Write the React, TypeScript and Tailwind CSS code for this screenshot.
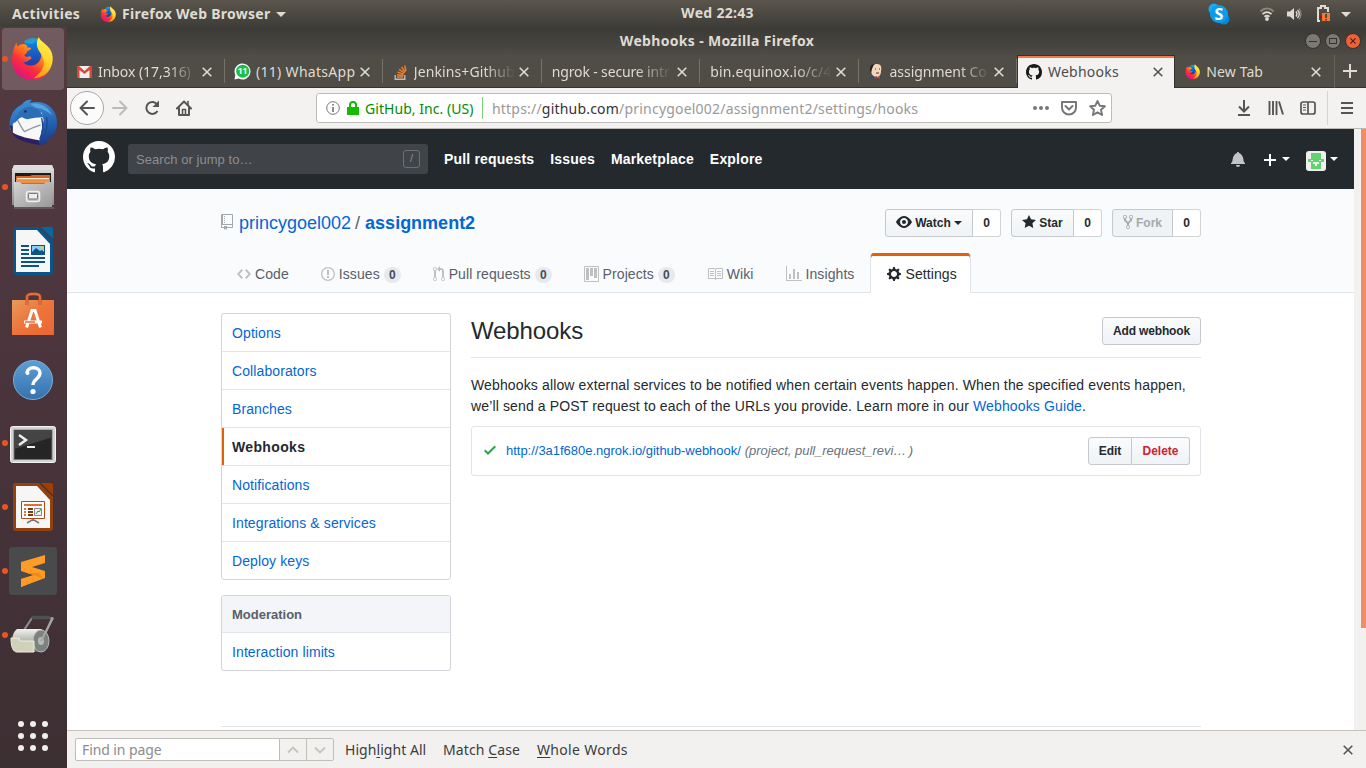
import React from "react";

const OCT = {
  github: "M8 0C3.58 0 0 3.58 0 8c0 3.54 2.29 6.53 5.47 7.59.4.07.55-.17.55-.38 0-.19-.01-.82-.01-1.49-2.01.37-2.53-.49-2.69-.94-.09-.23-.48-.94-.82-1.13-.28-.15-.68-.52-.01-.53.63-.01 1.08.58 1.23.82.72 1.21 1.87.87 2.33.66.07-.52.28-.87.51-1.07-1.78-.2-3.64-.89-3.64-3.95 0-.87.31-1.59.82-2.15-.08-.2-.36-1.02.08-2.12 0 0 .67-.21 2.2.82.64-.18 1.32-.27 2-.27.68 0 1.36.09 2 .27 1.53-1.04 2.2-.82 2.2-.82.44 1.1.16 1.92.08 2.12.51.56.82 1.27.82 2.15 0 3.07-1.87 3.75-3.65 3.95.29.25.54.73.54 1.48 0 1.07-.01 1.93-.01 2.2 0 .21.15.46.55.38A8.013 8.013 0 0 0 16 8c0-4.42-3.58-8-8-8z",
  repo: "M4 9H3V8h1v1zm0-3H3v1h1V6zm0-2H3v1h1V4zm0-2H3v1h1V2zm8-1v12c0 .55-.45 1-1 1H6v2l-1.5-1.5L3 16v-2H1c-.55 0-1-.45-1-1V1c0-.55.45-1 1-1h10c.55 0 1 .45 1 1zm-1 10H1v2h2v-1h3v1h5v-2zm0-10H2v9h9V1z",
  code: "M9.5 3L8 4.5 11.5 8 8 11.5 9.5 13 14 8 9.5 3zm-5 0L0 8l4.5 5L6 11.5 2.5 8 6 4.5 4.5 3z",
  issue: "M7 2.3c3.14 0 5.7 2.56 5.7 5.7s-2.56 5.7-5.7 5.7A5.71 5.71 0 0 1 1.3 8c0-3.14 2.56-5.7 5.7-5.7zM7 1C3.14 1 0 4.14 0 8s3.14 7 7 7 7-3.14 7-7-3.14-7-7-7zm1 3H6v5h2V4zm0 6H6v2h2v-2z",
  pull: "M11 11.28V5c-.03-.78-.34-1.47-.94-2.06C9.46 2.35 8.78 2.03 8 2H7V0L4 3l3 3V4h1c.27.02.48.11.69.31.21.2.3.42.31.69v6.28A1.993 1.993 0 0 0 10 15a1.993 1.993 0 0 0 1-3.72zm-1 2.92c-.66 0-1.2-.55-1.2-1.2 0-.65.55-1.2 1.2-1.2.65 0 1.2.55 1.2 1.2 0 .65-.55 1.2-1.2 1.2zM4 3c0-1.11-.89-2-2-2a1.993 1.993 0 0 0-1 3.72v6.56A1.993 1.993 0 0 0 2 15a1.993 1.993 0 0 0 1-3.72V4.72c.59-.34 1-.98 1-1.72zm-.8 10c0 .66-.55 1.2-1.2 1.2-.65 0-1.2-.55-1.2-1.2 0-.65.55-1.2 1.2-1.2.65 0 1.2.55 1.2 1.2zM2 4.2C1.34 4.2.8 3.65.8 3c0-.65.55-1.2 1.2-1.2.65 0 1.2.55 1.2 1.2 0 .65-.55 1.2-1.2 1.2z",
  project: "M10 12h3V2h-3v10zm-4-2h3V2H6v8zm-4 4h3V2H2v12zm-1 1h13V1H1v14zM14 0H1a1 1 0 0 0-1 1v14a1 1 0 0 0 1 1h13a1 1 0 0 0 1-1V1a1 1 0 0 0-1-1z",
  book: "M3 5h4v1H3V5zm0 3h4V7H3v1zm0 2h4V9H3v1zm11-5h-4v1h4V5zm0 2h-4v1h4V7zm0 2h-4v1h4V9zm2-6v9c0 .55-.45 1-1 1H9.5l-1 1-1-1H2c-.55 0-1-.45-1-1V3c0-.55.45-1 1-1h5.5l1 1 1-1H15c.55 0 1 .45 1 1zm-8 .5L7.5 3H2v9h6V3.5zm7-.5H9.5l-.5.5V12h6V3z",
  graph: "M16 14v1H0V0h1v14h15zM5 13H3V8h2v5zm4 0H7V3h2v10zm4 0h-2V6h2v7z",
  gear: "M14 8.77v-1.6l-1.94-.64-.45-1.09.88-1.84-1.13-1.13-1.81.91-1.09-.45-.69-1.92h-1.6l-.63 1.94-1.11.45-1.84-.88-1.13 1.13.91 1.81-.45 1.09L0 7.23v1.59l1.94.64.45 1.09-.88 1.84 1.13 1.13 1.81-.91 1.09.45.69 1.92h1.59l.63-1.94 1.11-.45 1.84.88 1.13-1.13-.92-1.81.47-1.09L14 8.75v.02zM7 11c-1.66 0-3-1.34-3-3s1.34-3 3-3 3 1.34 3 3-1.34 3-3 3z",
  eye: "M8.06 2C3 2 0 8 0 8s3 6 8.06 6C13 14 16 8 16 8s-3-6-7.94-6zM8 12c-2.2 0-4-1.78-4-4 0-2.2 1.8-4 4-4 2.22 0 4 1.8 4 4 0 2.22-1.78 4-4 4zm2-4c0 1.11-.89 2-2 2-1.11 0-2-.89-2-2 0-1.11.89-2 2-2 1.11 0 2 .89 2 2z",
  star: "M14 6l-4.9-.64L7 1 4.9 5.36 0 6l3.6 3.26L2.67 14 7 11.67 11.33 14l-.93-4.74L14 6z",
  fork: "M8 1a1.993 1.993 0 0 0-1 3.72V6L5 8 3 6V4.72A1.993 1.993 0 0 0 2 1a1.993 1.993 0 0 0-1 3.72V6.5l3 3v1.78A1.993 1.993 0 0 0 5 15a1.993 1.993 0 0 0 1-3.72V9.5l3-3V4.72A1.993 1.993 0 0 0 8 1zM2 4.2C1.34 4.2.8 3.65.8 3c0-.65.55-1.2 1.2-1.2.65 0 1.2.55 1.2 1.2 0 .65-.55 1.2-1.2 1.2zm3 10c-.66 0-1.2-.55-1.2-1.2 0-.65.55-1.2 1.2-1.2.65 0 1.2.55 1.2 1.2 0 .65-.55 1.2-1.2 1.2zm3-10c-.66 0-1.2-.55-1.2-1.2 0-.65.55-1.2 1.2-1.2.65 0 1.2.55 1.2 1.2 0 .65-.55 1.2-1.2 1.2z",
  bell: "M14 12v1H0v-1l.73-.58c.77-.77.81-2.55 1.19-4.42C2.69 3.23 6 2 6 2c0-.55.45-1 1-1s1 .45 1 1c0 0 3.39 1.23 4.16 5 .38 1.88.42 3.66 1.19 4.42l.66.58H14zm-7 4c1.11 0 2-.89 2-2H5c0 1.11.89 2 2 2z",
  plus: "M12 9H7v5H5V9H0V7h5V2h2v5h5v2z",
  check: "M12 5l-8 8-4-4 1.5-1.5L4 10l6.5-6.5L12 5z",
};

function Oct({ name, w, size = 16, className = "" }: { name: keyof typeof OCT; w: number; size?: number; className?: string }) {
  return (
    <svg className={`shrink-0 ${className}`} width={(w * size) / 16} height={size} viewBox={`0 0 ${w} 16`} fill="currentColor">
      <path fillRule="evenodd" d={OCT[name]} />
    </svg>
  );
}

function Firefox({ size, id }: { size: number; id: string }) {
  return (
    <svg width={size} height={size} viewBox="0 0 48 48" className="shrink-0">
      <defs>
        <linearGradient id={`${id}a`} x1="0.8" y1="0.1" x2="0.2" y2="0.9">
          <stop offset="0" stopColor="#ffbd2e" />
          <stop offset=".35" stopColor="#ff7b1c" />
          <stop offset=".65" stopColor="#fa2f3b" />
          <stop offset="1" stopColor="#e3127f" />
        </linearGradient>
        <linearGradient id={`${id}b`} x1="0.6" y1="0" x2="0.3" y2="1">
          <stop offset="0" stopColor="#fff44f" />
          <stop offset=".5" stopColor="#ffd52b" />
          <stop offset="1" stopColor="#ff9217" />
        </linearGradient>
        <linearGradient id={`${id}c`} x1="0.5" y1="0" x2="0.5" y2="1">
          <stop offset="0" stopColor="#0a84e8" />
          <stop offset="1" stopColor="#2b2f95" />
        </linearGradient>
      </defs>
      <circle cx="25" cy="20" r="15" fill={`url(#${id}c)`} />
      <path d="M14 6c6-5 14-5 19-1-3 0-6 0-9 3-4 0-8 0-10-2z" fill="#12b5e5" opacity=".7" />
      <path d="M3 18c0-4 2-8 4-11 0 2 0 3 1 4 3-3 6-3 9-2 1 1 1 3 1 3 2 0 4 0 4 1s-3 2-4 3c0 2-2 3-3 4 1 2 3 2 5 1 2 0 3 1 2 3-3 1-4 4-8 3 3 5 12 5 16 0 4-5 3-10 1-14 8 3 12 9 12 15 0 10-9 18-19 18C11 46 3 37 2 27c0-3 0-6 1-9z" fill={`url(#${id}a)`} />
      <path d="M30 1c2 5 8 7 12 13 4 7 3 14 0 20-4 7-11 10-17 10 8-6 13-14 9-22-2-5-6-8-6-14 0-3 1-5 2-7z" fill={`url(#${id}b)`} />
    </svg>
  );
}

function Thunderbird() {
  return (
    <svg width="48" height="48" viewBox="0 0 50 50">
      <defs>
        <linearGradient id="tb" x1=".4" y1="0" x2=".6" y2="1">
          <stop offset="0" stopColor="#3e8fd6" />
          <stop offset=".6" stopColor="#2460b0" />
          <stop offset="1" stopColor="#1b3a83" />
        </linearGradient>
      </defs>
      <path d="M1 32C-1 21 4 10 13 6c3-4 7-6 11-5-2 1-2 2-2 3 11-3 20 1 25 9 4 7 4 17 0 24l-3 1v3l-4 1-1 4-5 2-5-1z" fill="url(#tb)" />
      <path d="M1 27c1 7 4 12 9 15 7 3 13 5 22 6l-3-8z" fill="#2c1f63" />
      <path d="M4 26L15 16l19-2 2 8-4 21c-10-1-22-4-28-8z" fill="#f7f7f8" />
      <path d="M9 22c2 4 4 8 7 12 6-3 11-5 17-7" stroke="#8b929d" strokeWidth="1.200" fill="none" />
      <path d="M9 17C13 9 21 6 28 10c5 2 6 6 8 9-6 0-12 1-17 2-3 0-4-2-6-2-3 1-5 4-7 6 0-4 1-6 3-8z" fill="#2c6db8" />
      <path d="M22 5c11-2 20 4 23 12-5-4-11-8-17-8z" fill="#57a5df" />
      <path d="M34 20c2 8 2 15-2 22M39 19c2 8 0 15-3 21" stroke="#1b4a95" strokeWidth="1.500" fill="none" />
      <circle cx="17" cy="13" r="1.300" fill="#152e54" />
    </svg>
  );
}

function Files() {
  return (
    <svg width="44" height="46" viewBox="0 0 44 46">
      <defs>
        <linearGradient id="fi" x1="0" y1="0" x2="0" y2="1"><stop stopColor="#e3e3e3" /><stop offset="1" stopColor="#8b8b8b" /></linearGradient>
        <linearGradient id="fi2" x1="0" y1="0" x2="1" y2="1"><stop stopColor="#d2d2d2" /><stop offset="1" stopColor="#999" /></linearGradient>
      </defs>
      <path d="M3 1h38l2 5v35H1V6z" fill="url(#fi)" />
      <path d="M3 1h38l2 5H1z" fill="#dedede" />
      <path d="M4 9h36v11H4z" fill="#1c1c1c" />
      <path d="M5 12h14l2-1h18v9H5z" fill="#db6421" />
      <path d="M6 14h32v1.500H6z" fill="#f8e8d5" />
      <path d="M5 15.500h34V19H5z" fill="#ed9143" />
      <path d="M3 18h6l2 2h22l2-2h6v25H3z" fill="url(#fi2)" />
      <rect x="15.500" y="27.500" width="13" height="10" rx="2" fill="#b9b9b9" stroke="#efefef" strokeWidth="1.600" />
      <rect x="17.500" y="29.500" width="9" height="5.500" rx="1" fill="#eee" stroke="#777" />
      <path d="M3 44h40" stroke="#777" />
    </svg>
  );
}

function OfficeDoc({ kind }: { kind: "writer" | "impress" }) {
  const writer = kind === "writer";
  const c = writer ? "#0c5488" : "#93410e";
  return (
    <svg width="42" height="48" viewBox="0 0 42 48">
      <path d="M3 0h24l14 14v31a3 3 0 0 1-3 3H4a3 3 0 0 1-3-3V2a2 2 0 0 1 2-2z" fill={c} />
      <path d="M4 3h21l13 14v28H4z" fill="#f6f6f6" />
      <path d="M29 0h10a2 2 0 0 1 2 2v10z" fill={writer ? "#0369a3" : "#a33e03"} />
      {writer ? (
        <g fill="#0c5488">
          <path d="M9 18h8v2H9zM9 22h8v2H9zM9 26h8v2H9zM9 30h24v2H9zM9 34h24v2H9zM9 38h18v2H9z" />
          <rect x="19" y="18" width="14" height="10" />
          <path d="M20 19h12v6l-2-2-2 1-4-3-4 4z" fill="#8dccf5" />
          <circle cx="30" cy="20.500" r="1.500" fill="#e5cc4b" />
        </g>
      ) : (
        <g>
          <path d="M9.500 18.500h23v17h-23z" fill="#fff" stroke="#b04b11" />
          <path d="M12 21h18v2H12z" fill="#dc7132" />
          <path d="M12 25h2v2h-2zM12 28h2v2h-2zM12 31h2v2h-2z" fill="#dc7132" />
          <path d="M16 25h5v2h-5zM16 28h5v2h-5zM16 31h5v2h-5z" fill="#7d3810" />
          <path d="M22.500 25.500h7v7h-7z" fill="#eee" stroke="#888" />
          <path d="M24 31l2-3 1 1 2-3" stroke="#2a9d36" fill="none" />
          <path d="M21 36v2M15 40l5-3h2l5 3" stroke="#777" strokeWidth="1.500" fill="none" />
        </g>
      )}
    </svg>
  );
}

function Software() {
  return (
    <svg width="44" height="46" viewBox="0 0 44 46">
      <defs><linearGradient id="sw" x1="0" y1="0" x2="1" y2="1"><stop stopColor="#e89a5a" /><stop offset=".5" stopColor="#ed743b" /><stop offset="1" stopColor="#ec6532" /></linearGradient></defs>
      <path d="M1 8h42v35H1z" fill="url(#sw)" />
      <path d="M16 13V5c0-2 2-3 5-3h3c3 0 5 1 5 3v8" stroke="#c54e20" strokeWidth="3" fill="none" />
      <path d="M16 13V5c0-2 2-3 5-3h3c3 0 5 1 5 3v8" stroke="#ed7947" strokeWidth="1.300" fill="none" />
      <path d="M15.500 35.500l5.500-17h3l5.500 17M13 30h18" stroke="#fff" strokeWidth="3" fill="none" />
      <path d="M14 30h10" stroke="#e56d38" strokeWidth="1.500" />
    </svg>
  );
}

function Help() {
  return (
    <svg width="42" height="42" viewBox="0 0 42 42" className="mt-[2px]">
      <defs><linearGradient id="he" x1="0" y1="0" x2="0" y2="1"><stop stopColor="#5e9fd4" /><stop offset="1" stopColor="#3571af" /></linearGradient></defs>
      <circle cx="21" cy="21" r="19.500" fill="url(#he)" stroke="#79aeda" />
      <path d="M15 14c0-7 13-7 13 0 0 6-7 6-7 12" stroke="#fff" strokeWidth="3.400" fill="none" />
      <circle cx="15.500" cy="14" r="2" fill="#fff" /><circle cx="21" cy="32.500" r="2.600" fill="#fff" />
    </svg>
  );
}

function TerminalIcon() {
  return (
    <svg width="48" height="40" viewBox="0 0 48 40" className="mt-[4px]">
      <rect x="1.500" y="1.500" width="45" height="36" rx="2" fill="#d3d3d1" stroke="#f2f2f0" />
      <rect x="5" y="5" width="38" height="29.500" fill="#252525" stroke="#777" />
      <path d="M5.500 5.500h37v7L5.500 24z" fill="#444" />
      <path d="M10 10l7 5-7 5" stroke="#eee" strokeWidth="2.500" fill="none" /><path d="M18 22h8" stroke="#eee" strokeWidth="2" />
    </svg>
  );
}

function Sublime() {
  return (
    <svg width="48" height="48" viewBox="0 0 48 48">
      <rect width="48" height="48" rx="3" fill="#484a4b" />
      <path d="M12 32l13-4 4-2 4 4-21 10z" fill="#ee8a17" />
      <path d="M12 15l24-7v8l-13 4 13 4v7l-24 9v-3l18-7-18-6z" fill="#ff9b26" />
      <path d="M12 32l13-4 7 3-20 9z" fill="#ff9b26" />
      <path d="M18 26l7 2 9 3.500-4-5.500z" fill="#ee8a17" />
    </svg>
  );
}

function PaperRoll() {
  return (
    <svg width="46" height="40" viewBox="0 0 46 40">
      <defs><linearGradient id="pr" x1="0" y1="0" x2="0" y2="1"><stop stopColor="#f1f2ee" /><stop offset=".6" stopColor="#a7aaa5" /><stop offset="1" stopColor="#5e625e" /></linearGradient></defs>
      <path d="M14 15L22 3h20L32 26" fill="none" stroke="#8c928e" strokeWidth="2" />
      <path d="M23 2.500h16" stroke="#4d5150" strokeWidth="3.500" strokeLinecap="round" />
      <path d="M7 14h24c8 3 7 20-1 23H7C0 31 1 18 7 14z" fill="url(#pr)" />
      <ellipse cx="31" cy="26" rx="8" ry="11" fill="#7d827e" stroke="#b7bbb7" />
      <ellipse cx="31" cy="26" rx="3" ry="4" fill="#b7bbb7" />
      <path d="M1 23h8l1 3h14v11H7c-4 0-6-5-6-14z" fill="#cfd1b9" stroke="#eeefdc" />
      <path d="M31 26L43 3" stroke="#a3a8a4" strokeWidth="2" />
    </svg>
  );
}

function LauncherCell({ dot, active, children }: { dot?: boolean; active?: boolean; children: React.ReactNode }) {
  return (
    <div className="flex h-16 items-center justify-center">
      <div className={`relative mr-[1px] flex size-[62px] items-center justify-center rounded-[4px] ${active ? "bg-[#725b60]" : ""}`}>
        {dot && <span className="absolute top-[28px] left-0 size-[6px] rounded-full bg-[#e95420]" />}
        {children}
      </div>
    </div>
  );
}

function Launcher() {
  return (
    <aside className="flex w-[67px] shrink-0 flex-col bg-linear-to-b from-[#533b40] via-[#4a343c] to-[#3c2f32]">
      <LauncherCell dot active><Firefox size={46} id="dock" /></LauncherCell>
      <LauncherCell><Thunderbird /></LauncherCell>
      <LauncherCell dot><Files /></LauncherCell>
      <LauncherCell><OfficeDoc kind="writer" /></LauncherCell>
      <LauncherCell><Software /></LauncherCell>
      <LauncherCell><Help /></LauncherCell>
      <LauncherCell dot><TerminalIcon /></LauncherCell>
      <LauncherCell dot><OfficeDoc kind="impress" /></LauncherCell>
      <LauncherCell dot><Sublime /></LauncherCell>
      <LauncherCell dot><PaperRoll /></LauncherCell>
      <div className="mt-[54px] ml-[18px] grid w-[30px] grid-cols-3 gap-[6px]">
        {Array.from({ length: 9 }, (_, i) => <span key={i} className="size-[6px] rounded-full bg-[#f0efeb]" />)}
      </div>
    </aside>
  );
}

function Caret({ className = "" }: { className?: string }) {
  return <svg width="8" height="4" viewBox="0 0 8 4" className={`shrink-0 ${className}`} fill="currentColor"><path d="M0 0h8L4 4z" /></svg>;
}

function TopBar() {
  return (
    <div className="flex h-7 shrink-0 items-center bg-linear-to-b from-[#5a564d] to-[#3d3c37] font-['Noto_Sans',sans-serif] text-sm font-bold text-[#dfdbd2]">
      <div className="flex w-[600px] items-center pl-3">
        <span className="w-[88px] tracking-[0.32px]">Activities</span>
        <Firefox size={17} id="top" />
        <span className="ml-[5px] w-[150px] tracking-[0.27px] whitespace-nowrap">Firefox Web Browser</span>
        <svg width="10" height="5" viewBox="0 0 10 5" className="ml-[4px]" fill="currentColor"><path d="M0 0h10L5 5z" /></svg>
      </div>
      <div className="w-[235px] pb-[2px] text-center tracking-[0.3px]">Wed 22:43</div>
      <div className="ml-auto flex items-center justify-end pr-[15px]">
        <svg width="22" height="22" viewBox="0 0 22 22" className="-mt-px">
          <circle cx="6" cy="6" r="5.500" fill="#19aaf0" /><circle cx="16" cy="16" r="5.500" fill="#0785d5" /><circle cx="11" cy="11" r="9" fill="#0d9ce8" />
          <text x="11" y="16.500" textAnchor="middle" fontSize="16" fontWeight="bold" fill="#fff" fontFamily="Noto Sans, sans-serif">S</text>
        </svg>
        <svg width="16" height="14" viewBox="0 0 16 14" className="ml-[29px]" fill="none" stroke="#dfdbd2" strokeWidth="1.800">
          <path d="M1.500 4.500c4-4 9-4 13 0" stroke="#8a877f" /><path d="M3.500 7.200c3-2.800 6-2.800 9 0M5.500 9.800c2-1.600 3-1.600 5 0" /><circle cx="8" cy="12" r="1" fill="#dfdbd2" />
        </svg>
        <svg width="16" height="14" viewBox="0 0 16 14" className="-mt-px ml-[11px]">
          <path d="M1 4.500h3L8 1v12L4 9.500H1z" fill="#dfdbd2" />
          <path d="M10 4.500q2 2.500 0 5M11.500 3q3.500 4 0 8" stroke="#dfdbd2" strokeWidth="1.300" fill="none" /><path d="M13 1.500q4 5.500 0 11" stroke="#8a877f" strokeWidth="1.300" fill="none" />
        </svg>
        <svg width="16" height="18" viewBox="0 0 16 18" className="-mt-[2px] ml-[13px]">
          <path d="M5 17H3V4h3V2h4v2h3v4" stroke="#dfdbd2" strokeWidth="2" fill="none" />
          <path d="M7 9h8v8H7z" fill="#f27835" /><path d="M10.300 10h1.600v4h-1.600zM10.300 15h1.600v1.400h-1.600z" fill="#3d3c37" /><path d="M5 12h2v2H5z" fill="#c00" />
        </svg>
        <svg width="10" height="5" viewBox="0 0 10 5" className="ml-[10px]" fill="currentColor"><path d="M0 0h10L5 5z" /></svg>
      </div>
    </div>
  );
}

function Close({ size = 10, w = 1.6 }: { size?: number; w?: number }) {
  return <svg width={size} height={size} viewBox="0 0 10 10" className="shrink-0"><path d="M.7.7l8.600 8.600M9.300.7L.7 9.300" stroke="currentColor" strokeWidth={w} /></svg>;
}

function Tab({ icon, title, active, first, fade, sep = true, tight = "tracking-[0px]" }: { icon?: React.ReactNode; title: string; active?: boolean; first?: boolean; fade?: boolean; sep?: boolean; tight?: string }) {
  return (
    <div className={`flex h-full items-center ${first ? "w-[158px]" : "w-[158.400px]"} shrink-0 ${active ? "pr-[11px] pl-[8px]" : icon ? "pr-[13px] pl-[9px]" : "pr-[13px] pl-[10px]"} ${active ? "border-x border-t border-[#35332f] bg-[#f3f2f1] text-[#4c4c4c] shadow-[inset_0_2px_0_#f07746]" : sep ? "bg-[linear-gradient(#76736b,#76736b)] bg-[length:1px_24px] bg-[position:right_4px] bg-no-repeat text-[#dfdbd2]" : "text-[#dfdbd2]"}`}>
      {icon && <span className="mr-[5px] flex w-[17px] justify-center">{icon}</span>}
      <span className={`flex-1 pb-px text-[14px] whitespace-nowrap ${tight} ${fade ? "[mask-image:linear-gradient(90deg,#000_70%,transparent)]" : ""}`}>{title}</span>
      <span className={active ? "ml-1 text-[#555]" : "ml-1"}><Close /></span>
    </div>
  );
}

const gmail = <svg width="15" height="12" viewBox="0 0 15 12"><path d="M1 0h13v12H1z" fill="#f0eeea" /><path d="M0 12V0h2l5.500 5L13 0h2v12h-2.500V4l-5 4-5-4v8z" fill="#d8463a" /></svg>;
const whatsapp = (
  <svg width="17" height="17" viewBox="0 0 17 17"><path d="M.5 16.500L1.300 12a8 8 0 1 1 3.500 3.600z" fill="#fff" /><circle cx="8.700" cy="8.200" r="6.500" fill="#1bc04b" /><text x="8.600" y="11.300" fontSize="8.500" fontWeight="bold" textAnchor="middle" fill="#fff" fontFamily="Noto Sans, sans-serif">11</text></svg>
);
const stack = <svg width="14" height="16" viewBox="0 0 14 16" fill="none" strokeWidth="1.400"><path d="M1.200 11v4.200h9.600V11" stroke="#bcbbbb" /><path d="M3 13h6.200M3 10.800l6.300.7M3.500 8.200l6.200 1.900M5 5.400l5.400 3.500M7.500 3l3.800 5M10.700 1.500l1.300 5.500" stroke="#f48024" /></svg>;
const jenkins = (
  <svg width="16" height="17" viewBox="0 0 16 17"><path d="M1 16c0-2 2-3 4-3h6c2 0 3 1 3 3z" fill="#335061" /><path d="M3 7c0-4 2-6 6-6s5 3 4 7c0 4-2 6-4 6-4 0-6-3-6-7z" fill="#f3d6bc" /><path d="M3 10C1 6 2 1 7 1 5 2 5 4 4 6z" fill="#231f1c" /><path d="M8 13l-2 3 3-1 3 1V13l-2 1z" fill="#d33833" /><path d="M7 6h1M11 6h1M8 10h3" stroke="#42352d" /></svg>
);

function Browser() {
  return (
    <>
      <div className="flex h-[27px] shrink-0 items-center bg-linear-to-b from-[#3b3a36] to-[#4d4b45] pr-[5px]">
        <div className="flex-1 pb-[2px] pl-[62px] text-center text-[14px] font-bold tracking-[0.32px] text-[#dfdbd2]">Webhooks - Mozilla Firefox</div>
        <div className="-mt-px flex gap-1">
          <span className="flex size-4 items-center justify-center rounded-full border border-[#33322e] bg-[#7b7972]"><i className="h-px w-2 bg-[#33322e]" /></span>
          <span className="flex size-4 items-center justify-center rounded-full border border-[#33322e] bg-[#7b7972]"><i className="h-[6px] w-2 border border-[#33322e]" /></span>
          <span className="flex size-4 items-center justify-center rounded-full border border-[#33322e] bg-[#ec6136] text-[#4a2415]"><Close size={6} w={2} /></span>
        </div>
      </div>
      <div className="flex h-[33px] shrink-0 bg-[#504d46] shadow-[inset_0_-1px_0_#35332f]">
        <Tab first fade icon={gmail} title="Inbox (17,316)" tight="tracking-[-0.05px]" />
        <Tab icon={whatsapp} title="(11) WhatsApp" tight="tracking-[0.3px]" />
        <Tab fade icon={stack} title="Jenkins+Github" tight="tracking-[0.1px]" />
        <Tab fade title="ngrok - secure intr" tight="tracking-[-0.15px]" />
        <Tab fade title="bin.equinox.io/c/4" tight="tracking-[0.15px]" />
        <Tab fade icon={jenkins} title="assignment Co" tight="tracking-[-0.05px]" />
        <Tab active icon={<Oct name="github" w={16} className="text-[#1b1817]" />} title="Webhooks" tight="tracking-[0.25px]" />
        <Tab icon={<Firefox size={16} id="tab" />} title="New Tab" sep={false} tight="tracking-[0.1px]" />
        <div className="flex flex-1 items-center justify-center border-l border-[#67645d] text-[#dfdbd2]">
          <svg width="14" height="14" viewBox="0 0 14 14" className="-mt-[2px]"><path d="M7 0v14M0 7h14" stroke="currentColor" strokeWidth="2" /></svg>
        </div>
      </div>
      <div className="flex h-[41px] shrink-0 items-center border-b border-[#bdbab3] bg-[#f3f2f1] text-[#4c4c4c]">
        <div className="ml-[3px] flex size-[34px] items-center justify-center rounded-full border border-[#a9a8a6] bg-[#fbfbfb]">
          <svg width="16" height="16" viewBox="0 0 16 16" fill="none" stroke="#555" strokeWidth="2" strokeLinecap="round" strokeLinejoin="round"><path d="M15 8H1.500M8 1.500L1.500 8 8 14.500" /></svg>
        </div>
        <svg width="16" height="16" viewBox="0 0 16 16" className="ml-[8px]" fill="none" stroke="#bbb" strokeWidth="2" strokeLinecap="round" strokeLinejoin="round"><path d="M1 8h13.500M8 1.500L14.500 8 8 14.500" /></svg>
        <svg width="16" height="16" viewBox="0 0 16 16" className="ml-[16px]" fill="none" stroke="#555" strokeWidth="2"><path d="M13.300 4.500A6 6 0 1 0 13.500 11" /><path d="M15 .5v6.500H8.500z" fill="#555" stroke="none" /></svg>
        <svg width="16" height="16" viewBox="0 0 16 16" className="ml-[16px]" fill="none" stroke="#555" strokeWidth="2" strokeLinejoin="round" strokeLinecap="round"><path d="M1 8.500L8 1.500l7 7M3 8v7h10V8" /><path d="M6.500 14V9.500h3V14" strokeWidth="1.600" /><path d="M12 1.500v3" strokeWidth="1.600" /></svg>
        <div className="ml-[124px] flex h-[30px] w-[796px] items-center rounded-[3px] border border-[#bfbdba] bg-white pl-[9px] text-[14px]">
          <svg width="14" height="14" viewBox="0 0 14 14" className="shrink-0" fill="none" stroke="#777"><circle cx="7" cy="7" r="6.300" /><path d="M7 6v5M7 3v1.600" strokeWidth="1.700" /></svg>
          <svg width="12" height="14" viewBox="0 0 12 14" className="ml-[7px] shrink-0"><path d="M0 6h12v8H0z" fill="#12bc00" /><path d="M3 7V4q0-3 3-3t3 3v3" stroke="#12bc00" strokeWidth="2" fill="none" /></svg>
          <span className="ml-[6px] w-[111px] shrink-0 tracking-[0.05px] whitespace-nowrap text-[#058b00]">GitHub, Inc. (US)</span>
          <span className="ml-[6px] h-[22px] w-px shrink-0 bg-[#7ad477]" />
          <span className="ml-[9px] tracking-[0.2px] text-[#999]">https://<span className="text-[#333]">github.com</span>/princygoel002/assignment2/settings/hooks</span>
          <div className="ml-auto flex items-center pr-[5px] text-[#777]">
            <svg width="16" height="4" viewBox="0 0 16 4" fill="currentColor"><circle cx="2" cy="2" r="2" /><circle cx="8" cy="2" r="2" /><circle cx="14" cy="2" r="2" /></svg>
            <svg width="16" height="15" viewBox="0 0 16 15" className="ml-[12px]" fill="none" stroke="currentColor" strokeWidth="2" strokeLinejoin="round"><path d="M1 1h14v5.500a7 7 0 0 1-14 0z" /><path d="M4.500 5L8 8.500 11.500 5" strokeLinecap="round" /></svg>
            <svg width="17" height="16" viewBox="0 0 17 16" className="ml-[12px]" fill="none" stroke="currentColor" strokeWidth="1.900" strokeLinejoin="round"><path d="M8.500 1l2.200 4.700 5.200.6-3.900 3.500 1.100 5.200-4.600-2.600-4.600 2.600L5 9.800 1.100 6.300l5.200-.6z" /></svg>
          </div>
        </div>
        <div className="ml-auto flex h-full items-center text-[#555]">
          <svg width="14" height="16" viewBox="0 0 14 16" fill="none" stroke="currentColor" strokeWidth="2"><path d="M7 0v11M2 6.500l5 5 5-5M1 15h12" /></svg>
          <svg width="16" height="14" viewBox="0 0 16 14" className="ml-[17px]" fill="none" stroke="currentColor" strokeWidth="1.900"><path d="M1.500 0v14M5 0v14M8.500 0v14M11 .5l4 13" /></svg>
          <svg width="16" height="14" viewBox="0 0 16 14" className="ml-[16px]" fill="none" stroke="currentColor" strokeWidth="1.700"><rect x="1" y="1" width="14" height="12" rx="2" /><path d="M8 1v12" /><path d="M3 4h3M3 6.500h3M3 9h3" strokeWidth="1.100" /></svg>
          <span className="ml-[11px] h-[34px] w-px bg-[#d5d3d0]" />
          <svg width="12" height="12" viewBox="0 0 12 12" className="mr-[13px] ml-[13px]" stroke="currentColor" strokeWidth="2"><path d="M0 1h12M0 6h12M0 11h12" /></svg>
        </div>
      </div>
    </>
  );
}

function CountButton({ icon, label, caret, disabled, className }: { icon: React.ReactNode; label: string; caret?: boolean; disabled?: boolean; className: string }) {
  return (
    <div className="flex h-7 text-xs font-bold text-[#24292e]">
      <span className={`flex items-center justify-center gap-1 rounded-l-[3px] border border-[#c5c9cd] ${className} ${disabled ? "bg-[#eff3f6] text-[#a6a9ac]" : "bg-linear-to-b from-[#fafbfc] to-[#eff3f6]"}`}>
        <span className="-mt-[2px]">{icon}</span><span className="-ml-px">{label}</span>{caret && <Caret className="-ml-[1px]" />}
      </span>
      <span className="flex w-7 items-center justify-center rounded-r-[3px] border border-l-0 border-[#d1d4d7] bg-white">0</span>
    </div>
  );
}

function NavTab({ icon, label, count, active }: { icon: React.ReactNode; label: string; count?: boolean; active?: boolean }) {
  return (
    <div className={`flex h-10 items-center px-[16px] text-sm ${active ? "w-[101px] rounded-t-[3px] border-x border-[#e1e4e8] bg-white px-[14.500px] text-[#24292e] shadow-[inset_0_3px_0_#e36209]" : "text-[#586069]"}`}>
      <span className={`mr-1 flex pt-px ${active ? "" : "text-[#bec0c2]"}`}>{icon}</span>
      <span className="pt-[2px] tracking-[0.085px]">{label}</span>
      {count && <span className="mt-[3px] ml-[4.200px] rounded-[20px] bg-[#e7e9ec] px-[5px] py-[2px] text-xs leading-3 font-bold text-[#444d56]">0</span>}
    </div>
  );
}

const settingsItems = ["Options", "Collaborators", "Branches", "Webhooks", "Notifications", "Integrations & services", "Deploy keys"];

function Page() {
  return (
    <div className="flex min-h-0 flex-1">
      <div className="flex min-w-0 flex-1 flex-col bg-white font-['Liberation_Sans',Arial,sans-serif] text-sm text-[#24292e]">
        <header className="flex h-[60px] shrink-0 items-center bg-[#24292e] pr-4 pl-4 text-white">
          <Oct name="github" w={16} size={32} className="-mt-[4px]" />
          <div className="ml-[13px] flex h-[30px] w-[300px] items-center justify-between rounded-[3px] bg-[#404448] pr-2 pl-2 text-[13px] text-[#8b8e91]">
            <span className="pt-[2px] tracking-[0.05px]">Search or jump to…</span>
            <span className="flex h-[18px] w-[17px] items-center justify-center rounded-[3px] border border-[#6c7074] text-[11px]">/</span>
          </div>
          <nav className="ml-4 flex gap-4 font-bold tracking-[0.18px]"><a>Pull requests</a><a>Issues</a><a>Marketplace</a><a>Explore</a></nav>
          <div className="ml-auto flex items-center">
            <Oct name="bell" w={14} className="text-[#c2c4c5]" />
            <Oct name="plus" w={12} className="mt-[2px] ml-[19px]" />
            <Caret className="ml-[6px]" />
            <svg width="20" height="20" viewBox="0 0 20 20" className="mt-[3px] ml-[16px]"><rect width="20" height="20" rx="3" fill="#f0f0f0" /><path d="M5 2h10v6h3v3h-3v7H5v-7H2V8h3z" fill="#62d46d" /><path d="M5 9h2v1H5zM13 9h2v1h-2zM7 11h6v2h-2v2H9v-2H7z" fill="#f0f0f0" /></svg>
            <Caret className="ml-[4px]" />
          </div>
        </header>

        <section className="h-[104px] shrink-0 border-b border-[#e1e4e8] bg-[#fafbfc]">
          <div className="ml-[154px] w-[980px] pt-5">
            <div className="flex h-[44px] items-start">
              <Oct name="repo" w={12} className="mt-[5px] text-[#a3a8ad]" />
              <h1 className="ml-[6px] flex text-lg leading-7 text-[#0366d6]">
                <span>princygoel002</span><span className="mr-[5px] ml-[4px] text-[#586069]">/</span><span className="font-bold">assignment2</span>
              </h1>
              <div className="ml-auto flex gap-[10px]">
                <CountButton className="w-[88px]" icon={<Oct name="eye" w={16} />} label="Watch" caret />
                <CountButton className="w-[63px]" icon={<Oct name="star" w={14} />} label="Star" />
                <CountButton className="w-[61px]" icon={<Oct name="fork" w={10} />} label="Fork" disabled />
              </div>
            </div>
            <nav className="flex">
              <NavTab icon={<Oct name="code" w={14} />} label="Code" />
              <NavTab icon={<Oct name="issue" w={14} />} label="Issues" count />
              <NavTab icon={<Oct name="pull" w={12} />} label="Pull requests" count />
              <NavTab icon={<Oct name="project" w={15} />} label="Projects" count />
              <NavTab icon={<Oct name="book" w={16} />} label="Wiki" />
              <NavTab icon={<Oct name="graph" w={16} />} label="Insights" />
              <NavTab icon={<Oct name="gear" w={14} />} label="Settings" active />
            </nav>
          </div>
        </section>

        <main className="ml-[154px] flex w-[980px] flex-1 flex-col">
          <div className="flex flex-1 gap-5 pt-5">
            <div className="w-[230px] shrink-0 tracking-[0.1px] text-[#0366d6]">
              <div className="overflow-hidden rounded-[3px] border border-[#d1d5da]">
                {settingsItems.map((s) => (
                  <div key={s} className={`flex h-[38px] items-center border-b border-[#e1e4e8] px-[10px] last:h-[37px] last:border-b-0 ${s === "Webhooks" ? "font-bold tracking-[0.35px] text-[#24292e] shadow-[inset_2px_0_0_#e36209]" : ""}`}>{s}</div>
                ))}
              </div>
              <div className="mt-[15px] overflow-hidden rounded-[3px] border border-[#d1d5da]">
                <div className="flex h-[37px] items-center border-b border-[#e1e4e8] bg-[#f3f5f8] px-[10px] pt-[2px] text-[13px] font-bold tracking-[0px] text-[#586069]">Moderation</div>
                <div className="flex h-[37px] items-center px-[10px]">Interaction limits</div>
              </div>
            </div>
            <div className="flex-1">
              <div className="flex h-[45px] items-start justify-between border-b border-[#e1e4e8]">
                <h2 className="text-2xl leading-9 tracking-[-0.1px]">Webhooks</h2>
                <span className="mt-1 flex h-7 w-[99px] items-center justify-center rounded-[3px] border border-[#c5c9cd] bg-linear-to-b from-[#fafbfc] to-[#eff3f6] text-xs font-bold tracking-[-0.15px]">Add webhook</span>
              </div>
              <p className="mt-[17px] leading-[21px] tracking-[0.135px] whitespace-nowrap">
                Webhooks allow external services to be notified when certain events happen. When the specified events happen,<br />
                we’ll send a POST request to each of the URLs you provide. Learn more in our <a className="text-[#0366d6]">Webhooks Guide</a>.
              </p>
              <div className="mt-[9px] flex h-[50px] items-center rounded-[3px] border border-[#e1e4e8] pr-[10px] pl-[12px] text-[13px]">
                <Oct name="check" w={12} className="-mt-[2px] text-[#28a745]" />
                <a className="ml-[10px] tracking-[-0.02px] text-[#0366d6]">http://3a1f680e.ngrok.io/github-webhook/</a>
                <i className="ml-1 tracking-[-0.04px] text-[#6a737d]">(project, pull_request_revi…<span className="-ml-px"> )</span></i>
                <div className="ml-auto flex h-7 text-xs font-bold">
                  <span className="flex w-11 items-center justify-center rounded-l-[3px] border border-[#c5c9cd] bg-linear-to-b from-[#fafbfc] to-[#eff3f6]">Edit</span>
                  <span className="flex w-[58px] items-center justify-center rounded-r-[3px] border border-l-0 border-[#c5c9cd] bg-linear-to-b from-[#fafbfc] to-[#eff3f6] text-[#cb2431]">Delete</span>
                </div>
              </div>
            </div>
          </div>
          <div className="mb-[3px] h-px bg-[#e1e4e8]" />
        </main>
      </div>
      <div className="flex w-3 shrink-0 justify-end bg-[#f2f1f0]"><div className="h-[499px] w-[5px] bg-[#f08c68]" /></div>
    </div>
  );
}

function FindBar() {
  return (
    <div className="flex h-[38px] shrink-0 items-center border-t border-[#c6c1bb] bg-[#f2f1f0] pr-[13px] pl-2 text-[14px] text-[#3c3c3c]">
      <div className="flex h-[23px] w-[259px] overflow-hidden rounded-[2px] border border-[#c0bdb8] bg-white">
        <span className="flex flex-1 items-center pl-[6px] tracking-[-0.1px] text-[#8c8c8c]">Find in page</span>
        {["M1 6.500l5-5 5 5", "M1 1.500l5 5 5-5"].map((d) => (
          <span key={d} className="flex w-[27px] items-center justify-center border-l border-[#c0bdb8] bg-[#f2f1f0]"><svg width="12" height="8" viewBox="0 0 12 8"><path d={d} stroke="#c5c3c0" strokeWidth="1.800" fill="none" /></svg></span>
        ))}
      </div>
      <span className="ml-[11px] w-[98px] tracking-[0.05px]">High<u className="underline-offset-2">l</u>ight All</span>
      <span className="w-[94px] tracking-[0.1px]">Match <u className="underline-offset-2">C</u>ase</span>
      <span className="tracking-[0.32px]"><u className="underline-offset-2">W</u>hole Words</span>
      <span className="ml-auto text-[#555]"><Close /></span>
    </div>
  );
}

export default function App() {
  return (
    <div className="flex h-[768px] w-[1366px] flex-col overflow-hidden font-['Noto_Sans',sans-serif]">
      <TopBar />
      <div className="-mt-px flex min-h-0 flex-1">
        <Launcher />
        <div className="flex min-w-0 flex-1 flex-col pt-px">
          <Browser />
          <Page />
          <FindBar />
        </div>
      </div>
    </div>
  );
}
